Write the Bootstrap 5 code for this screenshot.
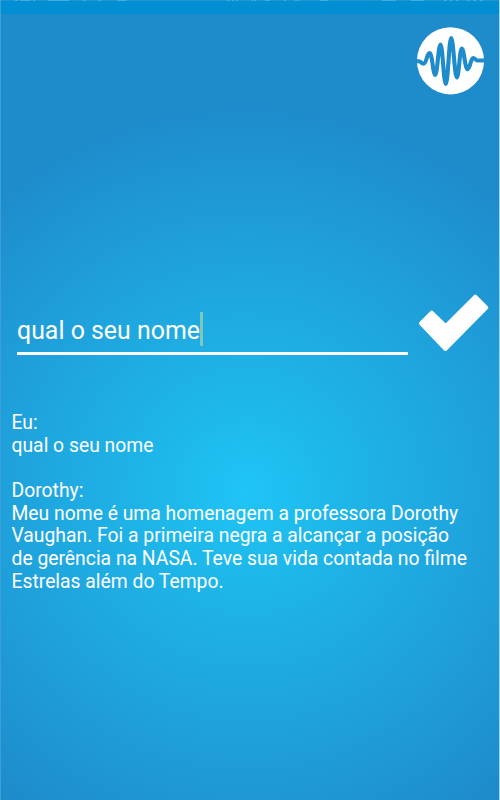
<!DOCTYPE html>
<html lang="pt-BR">
<head>
<meta charset="utf-8">
<meta name="viewport" content="width=device-width, initial-scale=1">
<title>Dorothy</title>
<link href="https://cdn.jsdelivr.net/npm/bootstrap@5.3.0/dist/css/bootstrap.min.css" rel="stylesheet">
<style>
  body { font-family: Roboto, "Liberation Sans", sans-serif; background: #1e8bcb; }
  .screen { height: 800px; background: radial-gradient(circle 390px at 246px 491px, #1fc5f5 0%, #1eb4e8 28%, #1fa0db 64%, #1e8bcb 100%); border-left: 1px solid #3b9fd8; border-right: 1px solid #a9d3ec; }
  .status { height: 14px; margin: 0 -1px; background: #008fd3; border-top: 1px solid #2095cf; }
  .status svg { margin-top: -1px; }
  .top-row { height: 281px; padding: 13px 14px 0 0; }
  .ask-row { height: 60px; padding-left: 16px; }
  .ask { width: 391px; height: 60px; border-bottom: 3px solid #fff; padding-top: 17px; font-size: 24.9px; line-height: 38px; }
  .caret { width: 3px; height: 34px; background: #7cc8bd; }
  .send { margin-left: 11px; }
  .talk { padding: 57px 20px 0 10.5px; font-size: 19.32px; line-height: 22.65px; }
</style>
</head>
<body>
<main class="screen text-white overflow-hidden">
  <div class="status">
    <svg class="d-block" width="500" height="1" aria-hidden="true"><path d="M15 .5h3M20 .5h11M33 .5h2M48 .5h21M83 .5h3M98 .5h3M117 .5h10M227 .5h3M232 .5h2M236 .5h2M251 .5h2M254 .5h2M265 .5h5M284 .5h2M295 .5h2M298 .5h2M320 .5h8M382 .5h14M411 .5h13M444 .5h3M450 .5h2M456 .5h2M467 .5h3M473 .5h3M480 .5h3" stroke="#4aa9de"/></svg>
  </div>
  <div class="top-row d-flex justify-content-end align-items-start">
    <svg width="69" height="68" viewBox="0 0 69 68" role="img" aria-label="Voz">
      <circle cx="34.5" cy="33.8" r="33.6" fill="#fff"/>
      <path d="M0 34.300H3C5 34.300 5.500 36.700 7.500 36.700C10.500 36.700 11 26 13.500 26C16.300 26 17 48 19.200 48C21.400 48 22.300 17.500 24.500 17.500S27.600 57 29.800 57S33 11 35.200 11S38.600 50.500 40.800 50.500S43.600 21.500 45.800 21.500S49 42.300 51.500 42.300C54.200 42.300 54.600 31 57.200 31C59 31 59.500 33.500 61.500 33.500H69" fill="none" stroke="#1e8bcb" stroke-width="4.100" stroke-linejoin="round"/>
    </svg>
  </div>
  <div class="ask-row d-flex align-items-start">
    <div class="ask d-flex align-items-start flex-shrink-0"><span>qual o seu nome</span><span class="caret"></span></div>
    <svg class="send flex-shrink-0 overflow-visible" width="70" height="57" viewBox="0 0 70 57" role="img" aria-label="Enviar">
      <path d="M2 28.300 12.700 17.700 26.700 31.200 56.300 1.700 67.300 12.700 26.300 54Z" fill="#fff" stroke="#fff" stroke-width="4" stroke-linejoin="round"/>
    </svg>
  </div>
  <div class="talk">
    <div>Eu:</div>
    <div>qual o seu nome</div>
    <br>
    <div>Dorothy:</div>
    <div class="text-nowrap">Meu nome é uma homenagem a professora Dorothy<br>Vaughan. Foi a primeira negra a alcançar a posição<br>de gerência na NASA. Teve sua vida contada no filme<br>Estrelas além do Tempo.</div>
  </div>
</main>
<script src="https://cdn.jsdelivr.net/npm/bootstrap@5.3.0/dist/js/bootstrap.bundle.min.js"></script>
</body>
</html>
